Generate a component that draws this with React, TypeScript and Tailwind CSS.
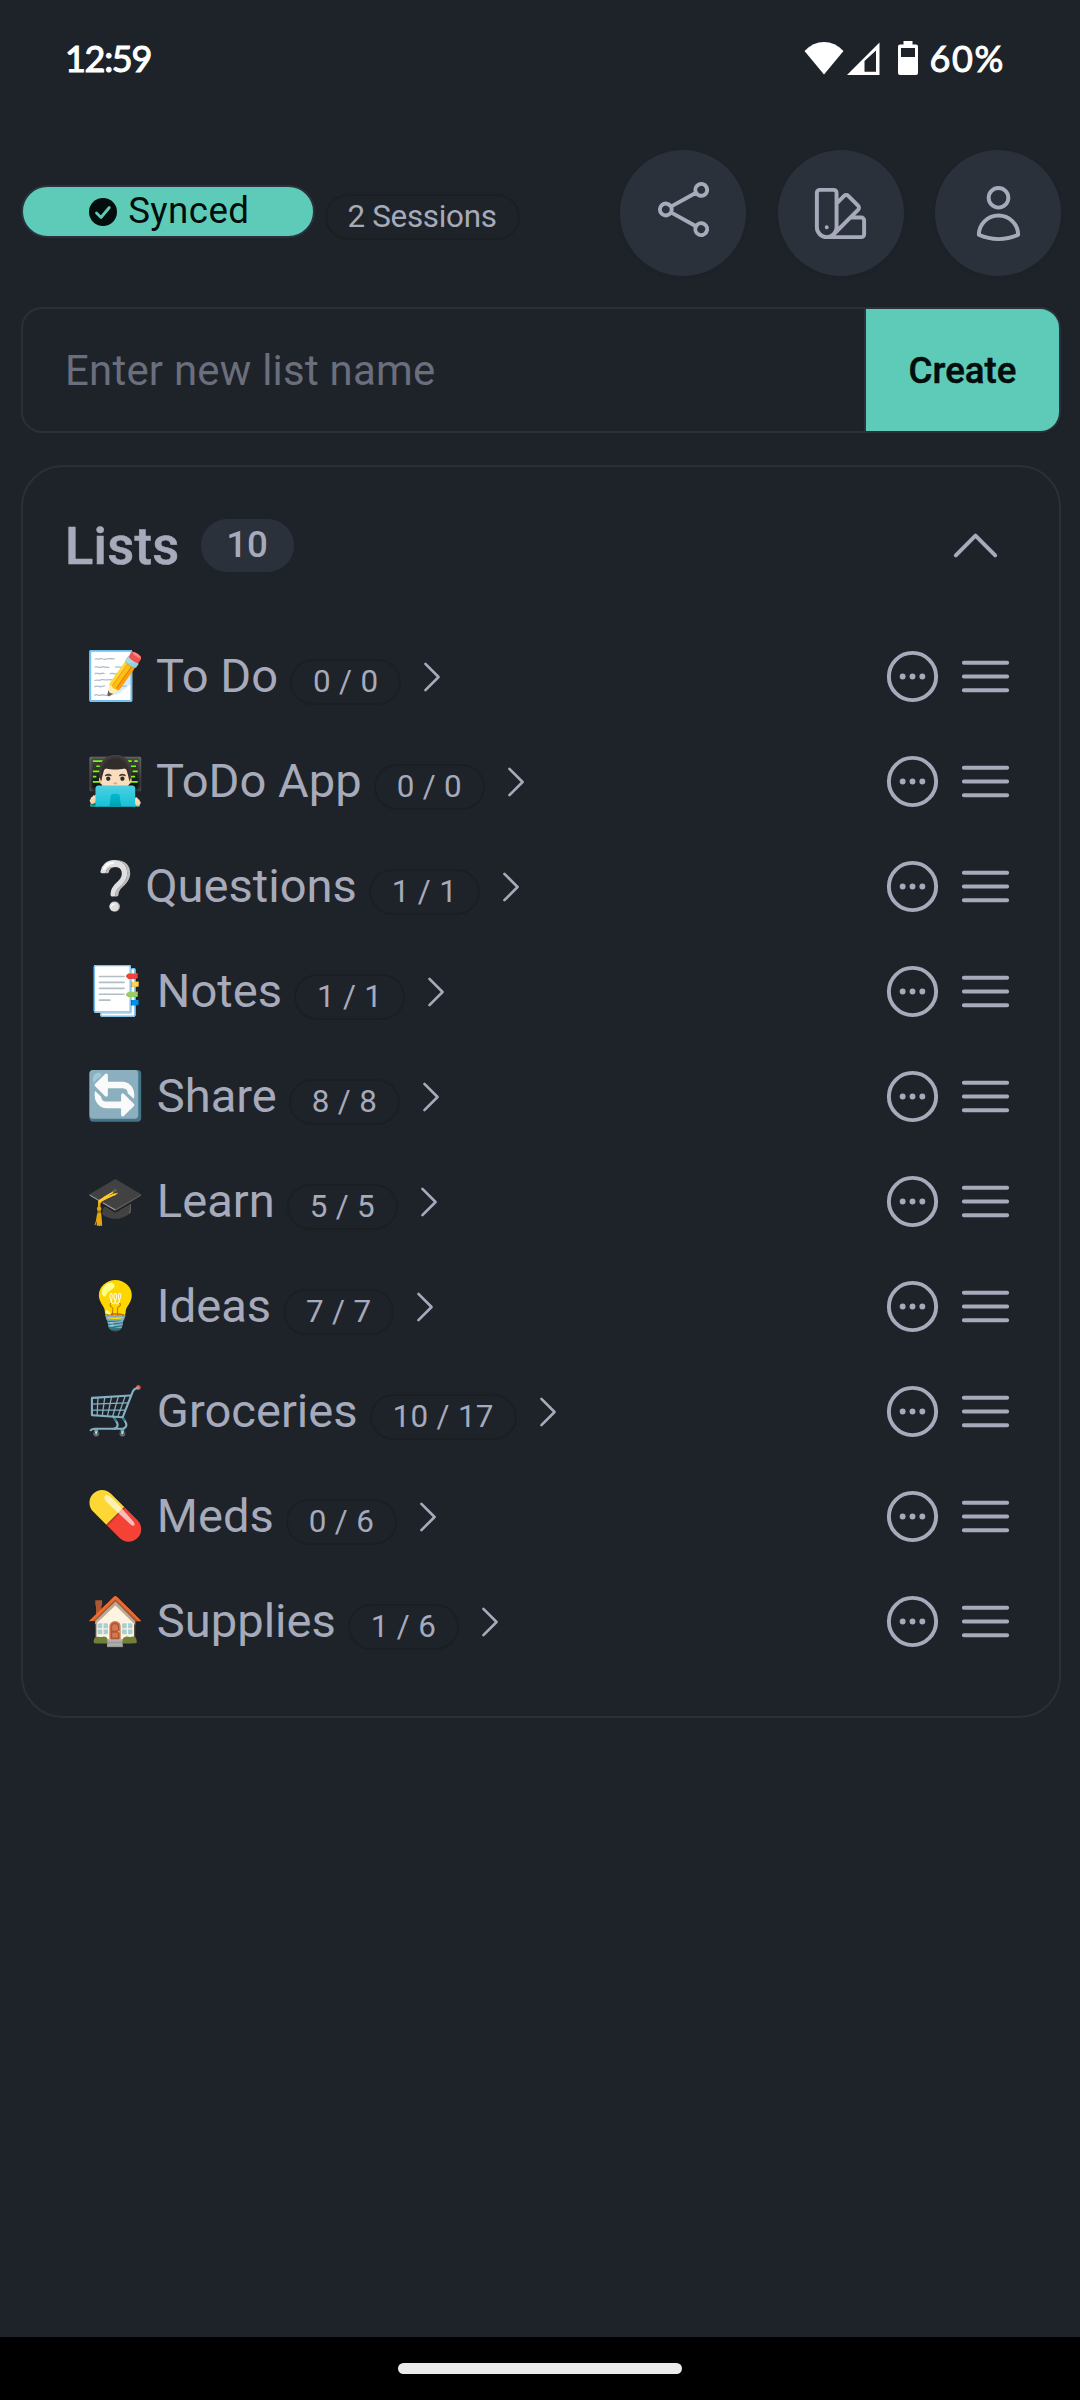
import React from "react";

type ListItem = { icon: string; name: string; count: string };

const lists: ListItem[] = [
  { icon: "📝", name: " To Do", count: "0 / 0" },
  { icon: "👨🏻‍💻", name: " ToDo App", count: "0 / 0" },
  { icon: "❔", name: "Questions", count: "1 / 1" },
  { icon: "📑", name: " Notes", count: "1 / 1" },
  { icon: "🔄", name: " Share", count: "8 / 8" },
  { icon: "🎓", name: " Learn", count: "5 / 5" },
  { icon: "💡", name: " Ideas", count: "7 / 7" },
  { icon: "🛒", name: " Groceries", count: "10 / 17" },
  { icon: "💊", name: " Meds", count: "0 / 6" },
  { icon: "🏠", name: " Supplies", count: "1 / 6" },
];

const paths = {
  share:
    "M7.217 10.907a2.25 2.25 0 1 0 0 2.186m0-2.186c.18.324.283.696.283 1.093s-.103.77-.283 1.093m0-2.186 9.566-5.314m-9.566 7.5 9.566 5.314m0 0a2.25 2.25 0 1 0 3.935 2.186 2.25 2.25 0 0 0-3.935-2.186Zm0-12.814a2.25 2.25 0 1 0 3.933-2.185 2.25 2.25 0 0 0-3.933 2.185Z",
  swatch:
    "M4.098 19.902a3.75 3.75 0 0 0 5.304 0l6.401-6.402M6.75 21A3.75 3.75 0 0 1 3 17.25V4.125C3 3.504 3.504 3 4.125 3h5.25c.621 0 1.125.504 1.125 1.125v4.072M6.75 21a3.75 3.75 0 0 0 3.75-3.75V8.197M6.75 21h13.125c.621 0 1.125-.504 1.125-1.125v-5.25c0-.621-.504-1.125-1.125-1.125h-4.072M10.5 8.197l2.88-2.88c.438-.439 1.15-.439 1.59 0l3.712 3.713c.44.44.44 1.152 0 1.59l-2.879 2.88M6.75 17.25h.008v.008H6.75v-.008Z",
  user:
    "M15.75 6a3.75 3.75 0 1 1-7.5 0 3.75 3.75 0 0 1 7.5 0ZM4.501 20.118a7.5 7.5 0 0 1 14.998 0A17.933 17.933 0 0 1 12 21.75c-2.676 0-5.216-.584-7.499-1.632Z",
  chevronUp: "m4.5 15.75 7.5-7.5 7.5 7.5",
  chevronRight: "m8.25 4.5 7.5 7.5-7.5 7.5",
  ellipsis:
    "M8.625 12a.375.375 0 1 1-.75 0 .375.375 0 0 1 .75 0Zm0 0H8.25m4.125 0a.375.375 0 1 1-.75 0 .375.375 0 0 1 .75 0Zm0 0H12m4.125 0a.375.375 0 1 1-.75 0 .375.375 0 0 1 .75 0Zm0 0h-.375M21 12a9 9 0 1 1-18 0 9 9 0 0 1 18 0Z",
  bars: "M3.75 6.75h16.5M3.75 12h16.5m-16.5 5.25h16.5",
};

function Icon({ d, className = "size-[63px]" }: { d: string; className?: string }) {
  return (
    <svg
      viewBox="0 0 24 24"
      fill="none"
      stroke="currentColor"
      strokeWidth={1.5}
      strokeLinecap="round"
      strokeLinejoin="round"
      className={`shrink-0 ${className}`}
    >
      <path d={d} />
    </svg>
  );
}

function StatusBar() {
  return (
    <div className="flex h-[150px] items-start justify-between pl-[65px] pr-[75px] pt-[38px] font-['Lato',sans-serif] text-[36px] leading-[43px] text-white">
      <span className="-mt-px tracking-[-1.3px] [-webkit-text-stroke:1.1px_white]">12:59</span>
      <div className="flex items-start">
        <svg viewBox="0 0 116 36" className="mt-[2px] h-[36px] w-[116px]" fill="currentColor">
          <path d="M0.5 11Q9 2 20 2T39.5 11L20 34.5Z" />
          <path fillRule="evenodd" d="M43 35 75.5 2.500V35ZM60.500 21V31.700H72V10.500Z" />
          <path
            fillRule="evenodd"
            d="M99.500 1h9v3.500h3.500a2 2 0 0 1 2 2V33a2 2 0 0 1-2 2h-16a2 2 0 0 1-2-2V6.500a2 2 0 0 1 2-2h3.500ZM97 8v9h14V8Z"
          />
        </svg>
        <span className="-mt-px ml-[10px] tracking-[1.6px] [-webkit-text-stroke:1px_white]">60%</span>
      </div>
    </div>
  );
}

function RoundButton({ d, raised = false }: { d: string; raised?: boolean }) {
  return (
    <button className="grid size-[126px] place-items-center rounded-full bg-[#2a313b] shadow-[0_2px_4px_rgba(0,0,0,0.06)]">
      <Icon d={d} className={raised ? "size-[63px] mb-[7px]" : "size-[63px]"} />
    </button>
  );
}

function Toolbar() {
  return (
    <header className="flex h-[126px] items-center">
      <div className="-mt-[3px] flex h-[53px] w-[294px] items-center justify-center gap-[11.500px] rounded-full border-2 border-[#2a313b] bg-[#5ecbb9] pl-[2px] text-[36.700px] leading-none tracking-[0.4px] text-[#030d0b]">
        <svg viewBox="0 0 28 28" className="mt-[1px] size-[28px]">
          <circle cx="14" cy="14" r="14" fill="#030d0b" />
          <path
            d="M7.500 15 12 19.500 20.300 9.500"
            fill="none"
            stroke="#5ecbb9"
            strokeWidth="2.800"
            strokeLinecap="round"
            strokeLinejoin="round"
          />
        </svg>
        <span>Synced</span>
      </div>
      <div className="ml-[10px] mt-[8px] flex h-[46px] w-[195px] items-center justify-center rounded-full border-2 border-[#1b1e22] pr-[1px] text-[31.400px] leading-none tracking-[-0.3px]">
        2 Sessions
      </div>
      <div className="ml-auto flex gap-[31.500px]">
        <RoundButton d={paths.share} raised />
        <RoundButton d={paths.swatch} />
        <RoundButton d={paths.user} />
      </div>
    </header>
  );
}

function CreateForm() {
  return (
    <form className="mt-[31px] flex h-[126px]">
      <input
        placeholder="Enter new list name"
        className="min-w-0 flex-1 rounded-l-[21px] border-2 border-r-0 border-[#2a303a] bg-transparent pl-[42px] pt-[2px] text-[41.900px] tracking-[0.25px] outline-none placeholder:text-[#6b6e7d]"
      />
      <button
        type="button"
        className="w-[197px] rounded-r-[21px] border-2 border-[#2a313b] bg-[#5ecbb9] pt-px text-[36.700px] font-medium text-[#030d0b] shadow-[0_2px_4px_rgba(0,0,0,0.06)] [-webkit-text-stroke:0.5px_#030d0b]"
      >
        Create
      </button>
    </form>
  );
}

function ListRow({ icon, name, count }: ListItem) {
  return (
    <li className="flex h-[105px] items-center pl-[63px] pr-[42px]">
      <span className="whitespace-pre pb-px text-[47.100px] leading-[56px]">
        {icon}
        <span className="ml-[0.500px]">{name}</span>
      </span>
      <span className="ml-[12px] mt-[11px] flex h-[46px] items-center rounded-full border-2 border-[#1b1e22] px-[21px] text-[31.400px] leading-none tracking-[0.3px]">
        {count}
      </span>
      <Icon d={paths.chevronRight} className="ml-[10px] size-[42px]" />
      <div className="ml-auto flex gap-[10px]">
        <Icon d={paths.ellipsis} />
        <Icon d={paths.bars} />
      </div>
    </li>
  );
}

export default function App() {
  return (
    <div className="flex h-[2400px] w-[1080px] flex-col overflow-hidden bg-[#1e232a] font-['Roboto','Noto_Color_Emoji',sans-serif] text-[#a6aaba]">
      <StatusBar />
      <main className="flex flex-1 flex-col pl-[21px] pr-[19px]">
        <Toolbar />
        <CreateForm />
        <section className="mt-[32px] rounded-[42px] border-2 border-[#2a303a] pb-[42px]">
          <div className="flex h-[157px] items-center pl-[42px] pr-[52px]">
            <h2 className="pt-px text-[52.400px] font-medium leading-none tracking-[0.3px] [-webkit-text-stroke:0.6px_#a6aaba]">
              Lists
            </h2>
            <span className="ml-[21px] flex h-[53px] w-[93px] items-center justify-center rounded-full bg-[#2a313b] text-[36.700px] font-medium leading-none">
              10
            </span>
            <Icon d={paths.chevronUp} className="ml-auto size-[63px]" />
          </div>
          <ul>
            {lists.map((item) => (
              <ListRow key={item.name} {...item} />
            ))}
          </ul>
        </section>
      </main>
      <footer className="flex h-[63px] justify-center bg-black pt-[26px]">
        <div className="h-[11px] w-[284px] rounded-full bg-[#ebebeb]" />
      </footer>
    </div>
  );
}
